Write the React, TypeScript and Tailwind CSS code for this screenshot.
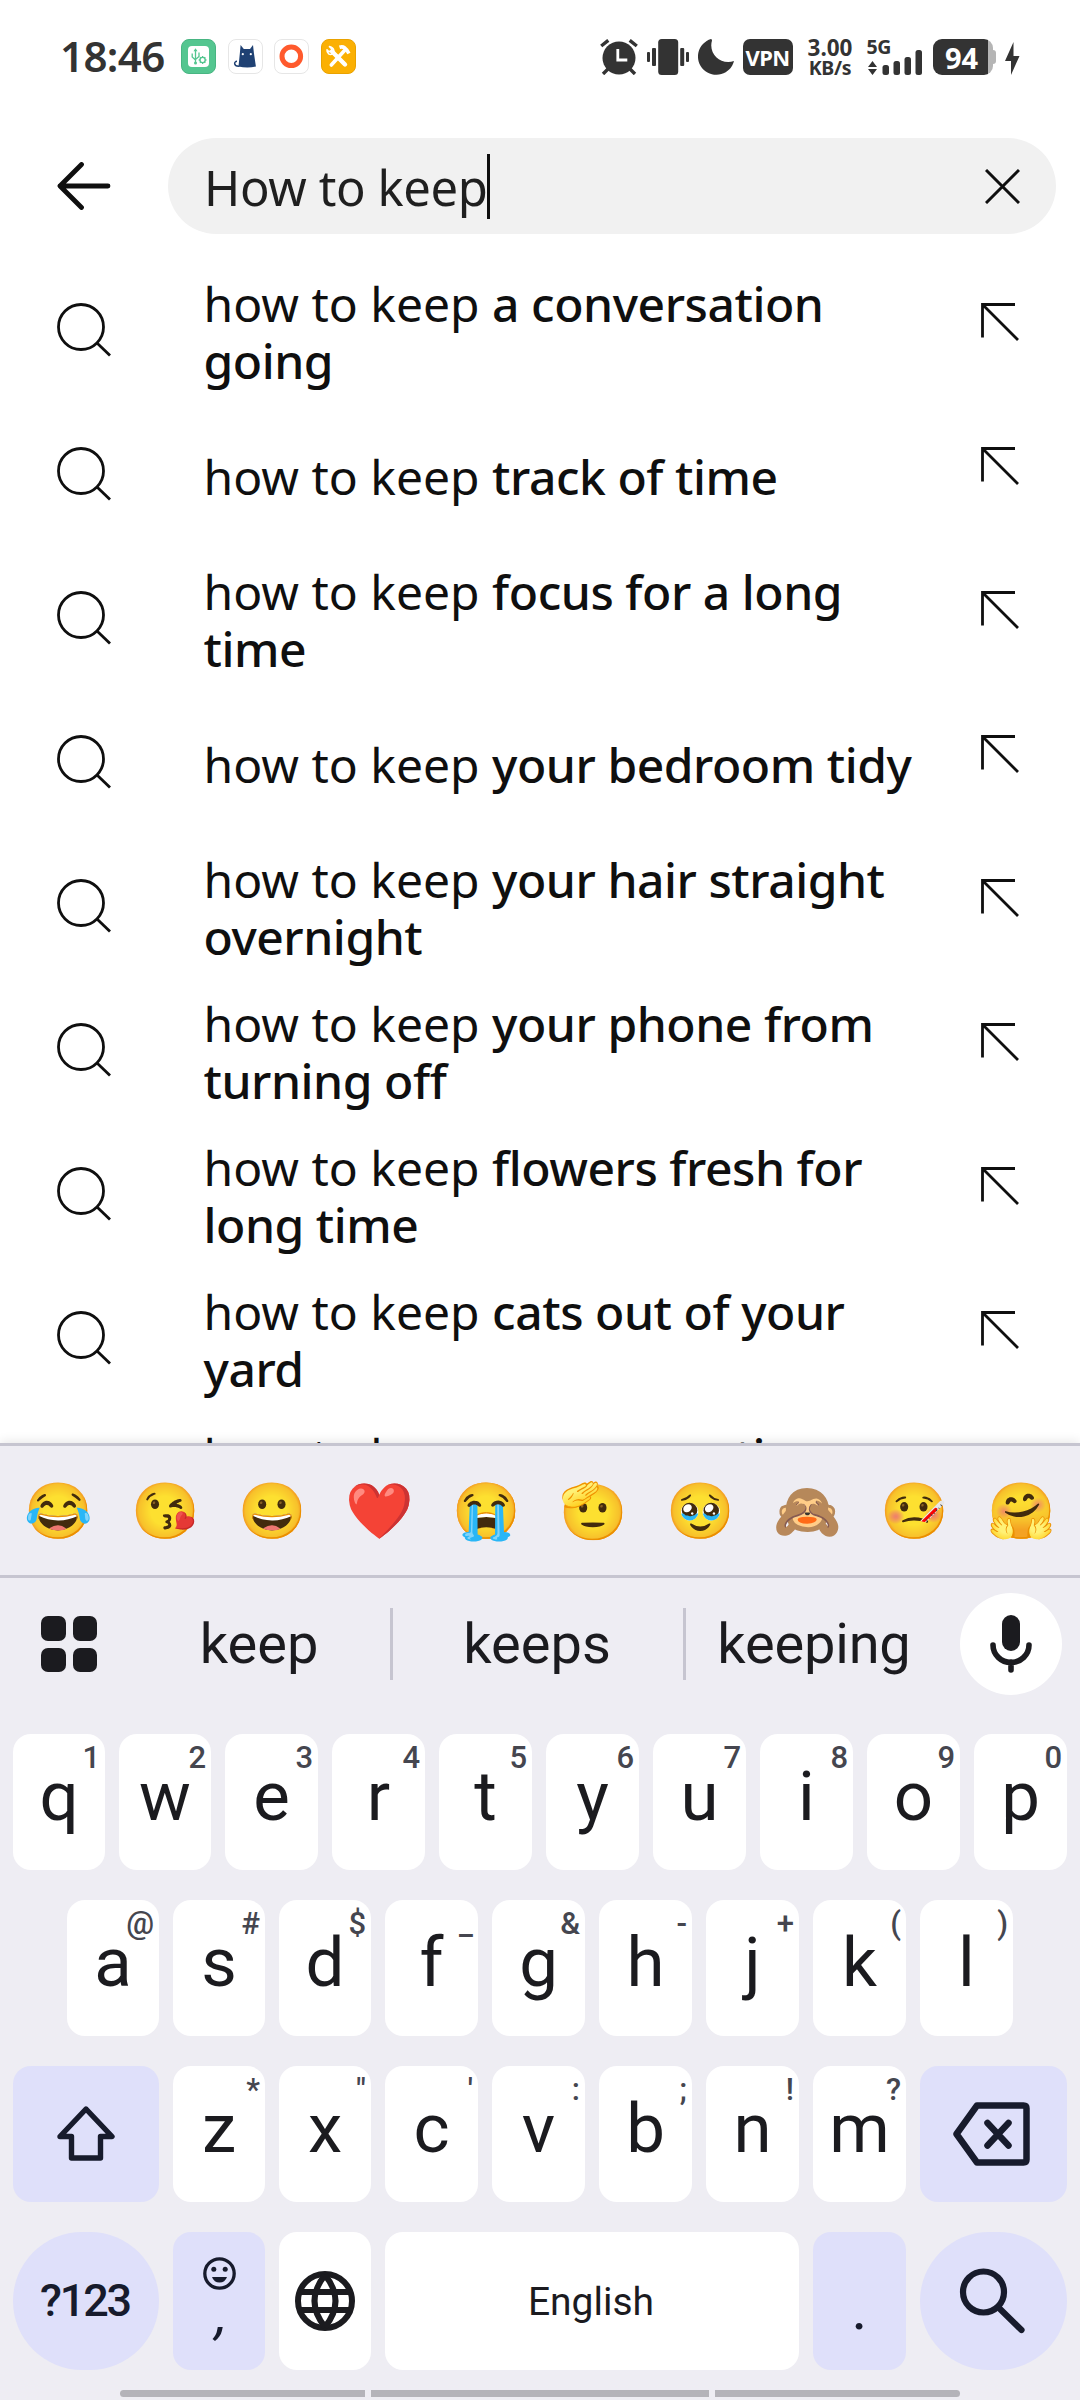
import React from "react";

const SUGGESTIONS: [string, string][] = [
  ["a conversation", "going"],
  ["track of time", ""],
  ["focus for a long", "time"],
  ["your bedroom tidy", ""],
  ["your hair straight", "overnight"],
  ["your phone from", "turning off"],
  ["flowers fresh for", "long time"],
  ["cats out of your", "yard"],
  ["a conversation", "going"],
];

const EMOJIS = ["😂", "😘", "😀", "❤️", "😭", "🫡", "🥹", "🙈", "🤒", "🤗"];

const ROW1: [string, string][] = [["q", "1"], ["w", "2"], ["e", "3"], ["r", "4"], ["t", "5"], ["y", "6"], ["u", "7"], ["i", "8"], ["o", "9"], ["p", "0"]];
const ROW2: [string, string][] = [["a", "@"], ["s", "#"], ["d", "$"], ["f", "_"], ["g", "&"], ["h", "-"], ["j", "+"], ["k", "("], ["l", ")"]];
const ROW3: [string, string][] = [["z", "*"], ["x", '"'], ["c", "'"], ["v", ":"], ["b", ";"], ["n", "!"], ["m", "?"]];

function StatusBar() {
  return (
    <header className="flex h-[114px] shrink-0 items-start pt-[39px] font-['Noto_Sans',sans-serif] text-[#333333]">
      <div className="ml-[60px] h-9 w-[121px] text-[42px] leading-[34px] font-semibold tracking-[-0.6px] whitespace-nowrap">18:46</div>
      <div className="flex gap-[11.5px]">
        <svg className="size-[35px]" viewBox="0 0 35 35">
          <rect x=".5" y=".5" width="34" height="34" rx="7.5" fill="#54c690" stroke="#48b582" />
          <rect x="7" y="7" width="21" height="21" rx="4" fill="#fff" />
          <g stroke="#54c690" fill="none" strokeWidth="1.3">
            <path d="M14.5 11v13M11.2 14.5v3.5l3.3 3M18 13.5v4l-3.5 3" />
            <circle cx="21.6" cy="21" r="2.6" />
            <path d="M21.6 17v1.4M21.6 23.6V25M17.7 21h1.4M24.1 21h1.4M18.9 18.3l1 1M23.3 22.7l1 1M24.3 18.3l-1 1M19.9 22.7l-1 1" />
          </g>
          <path d="M14.5 9.3l2 3h-4z" fill="#54c690" />
          <circle cx="14.5" cy="24" r="1.5" fill="#54c690" />
        </svg>
        <svg className="size-[35px]" viewBox="0 0 35 35">
          <rect x=".5" y=".5" width="34" height="34" rx="7.5" fill="#fff" stroke="#e6e6e6" />
          <path d="M12.6 6l3.2 4h6.2l3-4 .9 8 2 13.4q-8.500 2-17.400 0l1.400-13.600z" fill="#1f4173" />
          <path d="M9 22.3c-3.2 0-3.8 5.3 2.500 4.800" fill="none" stroke="#1f4173" strokeWidth="1.500" />
          <circle cx="14.8" cy="15.2" r="1.100" fill="#fff" />
          <circle cx="22.8" cy="15.2" r="1.100" fill="#fff" />
        </svg>
        <svg className="size-[35px]" viewBox="0 0 35 35">
          <rect x=".5" y=".5" width="34" height="34" rx="7.5" fill="#fff" stroke="#e6e6e6" />
          <circle cx="17.300" cy="17.300" r="9.300" fill="none" stroke="#ff5a2d" strokeWidth="5" />
        </svg>
        <svg className="size-[35px]" viewBox="0 0 35 35">
          <rect x=".5" y=".5" width="34" height="34" rx="7.5" fill="#fbb003" stroke="#e9a200" />
          <g stroke="#fff" fill="none">
            <path d="M11 12.500L24 25.500" strokeWidth="4.400" strokeLinecap="round" />
            <path d="M10.300 26L23.500 11.500" strokeWidth="3.600" strokeLinecap="round" />
            <path d="M8.500 7.600l2.300 2.300-.6 2.200-2.500.5-1.700-1.700c-.4 3.800 3 5.200 5.200 4.200s3-6-2.700-7.500z" strokeWidth="1.600" strokeLinejoin="round" />
            <path d="M18.500 8.300c4-1.300 6.300.4 9.400 6.200" strokeWidth="3.600" />
          </g>
        </svg>
      </div>
      <svg className="ml-[244px] h-9 w-[38px]" viewBox="0 0 38 36">
        <g fill="none" stroke="#333" strokeWidth="3.400">
          <path d="M1.200 7L8.300 1.300M29.700 1.300L36.800 7M8 30l-5 5M30 30l5 5" />
        </g>
        <circle cx="19" cy="19" r="16.500" fill="#333" />
        <path d="M17.800 10v11h9.500" fill="none" stroke="#fff" strokeWidth="2.800" />
      </svg>
      <svg className="ml-[9px] h-9 w-[42px]" viewBox="0 0 42 36" fill="#333">
        <rect x="11.200" width="20" height="36" rx="3.500" />
        <rect y="13" width="3" height="10" rx="1" />
        <rect x="5" y="9" width="4" height="18" rx="1" />
        <rect x="33.200" y="9" width="4" height="18" rx="1" />
        <rect x="39" y="13" width="3" height="10" rx="1" />
      </svg>
      <svg className="ml-[9px] h-9 w-9" viewBox="0 0 36 36">
        <path d="M13 0A18.300 18.300 0 1 0 36 22C23 26.500 10 15 14 1.500Q14 0 13 0Z" fill="#333" />
      </svg>
      <div className="ml-[9px] flex h-9 w-[50px] items-center justify-center rounded-[7px] bg-[#333333] text-[22px] leading-none font-bold tracking-[-0.6px] text-white">VPN</div>
      <div className="ml-[14px] w-[47px] text-center font-bold">
        <div className="text-[22.500px] leading-[17px] whitespace-nowrap">3.00</div>
        <div className="mt-[3px] text-[19.500px] leading-[18px] tracking-[-0.3px] whitespace-nowrap">KB/s</div>
      </div>
      <div className="ml-[13px] h-9 w-[56px]">
        <div className="text-[19.500px] leading-[15px] font-bold tracking-[-0.5px]">5G</div>
        <svg className="-mt-[4px] h-[25px] w-[56px]" viewBox="0 0 56 25" fill="#333">
          <path d="M1 17l4.500-6 4.500 6zM1 19l4.500 6 4.500-6z" />
          <rect x="15.500" y="15" width="6.500" height="10" rx="2.500" />
          <rect x="26.500" y="11" width="6.500" height="14" rx="2.500" />
          <rect x="37.500" y="7" width="6.500" height="18" rx="2.500" />
          <rect x="48.500" y="0" width="6.500" height="25" rx="2.500" />
        </svg>
      </div>
      <div className="relative ml-[10px] h-9 w-[63px]">
        <div className="absolute top-[11px] right-0 h-[14px] w-2 rounded-[3px] bg-[#b5b5b5]" />
        <div className="relative flex h-9 w-[60px] items-center justify-center overflow-hidden rounded-[9px] bg-[linear-gradient(90deg,#333_55.500px,#b5b5b5_55.500px)] pr-[2px] text-[29px] leading-none font-bold text-white">94</div>
      </div>
      <svg className="mt-[3px] ml-[9px] h-[33px] w-[15px]" viewBox="0 0 15 33">
        <path d="M8.500 0L0 19h6l0 14L14.500 14H8.500z" fill="#333" />
      </svg>
    </header>
  );
}

function Key({ c, h }: { c: string; h: string }) {
  return (
    <div className="relative flex h-[136px] justify-center rounded-[18px] bg-white">
      <span className="absolute top-[9px] right-[5px] text-[31px] leading-[30px] font-medium text-[#45464f]">{h}</span>
      <span className="pt-[23px] text-[69px] leading-[80px]">{c}</span>
    </div>
  );
}

function Keyboard() {
  return (
    <section className="relative z-10 flex h-[957px] shrink-0 flex-col border-t-[3px] border-[#c6c5d0] bg-[#eeedf3] font-['Roboto',sans-serif] text-[#1b1b1f] shadow-[0_-2px_10px_rgba(0,0,0,0.09)]">
      <div className="grid h-[132px] grid-cols-10 items-center border-b-[3px] border-[#c6c5d0] px-[5px] font-['Noto_Color_Emoji',sans-serif]">
        {EMOJIS.map((e) => (
          <span key={e} className="flex justify-center pt-[1px] text-[55px] leading-none">{e}</span>
        ))}
      </div>
      <div className="flex h-[156px] items-start pt-[15px]">
        <div className="mt-[23px] ml-[41px] grid h-14 w-14 grid-cols-2 gap-[7px]">
          <i className="rounded-[7px] bg-[#1b1b1f]" />
          <i className="rounded-[7px] bg-[#1b1b1f]" />
          <i className="rounded-[7px] bg-[#1b1b1f]" />
          <i className="rounded-[7px] bg-[#1b1b1f]" />
        </div>
        <div className="ml-[31px] w-[262px] pt-[18px] text-center text-[56px] leading-[66px]">keep</div>
        <div className="mt-[15px] h-[72px] w-[3px] bg-[#c6c5d0]" />
        <div className="w-[290px] pt-[18px] pr-[2px] text-center text-[56px] leading-[66px]">keeps</div>
        <div className="mt-[15px] h-[72px] w-[3px] bg-[#c6c5d0]" />
        <div className="w-[256px] pt-[18px] text-center text-[56px] leading-[66px] tracking-[-0.2px]">keeping</div>
        <div className="ml-[18px] flex size-[102px] items-center justify-center rounded-full bg-white">
          <svg className="h-[58px] w-[42px]" viewBox="0 0 42 58">
            <rect x="12" y="0" width="18" height="36" rx="9" fill="#1b1b1f" />
            <path d="M3 30a18 17.500 0 0 0 36 0M21 47v8" fill="none" stroke="#1b1b1f" strokeWidth="5.600" strokeLinecap="round" />
          </svg>
        </div>
      </div>
      <div className="grid grid-cols-[92px_92px_repeat(8,93px)] gap-x-[14px] px-[13px]">
        {ROW1.map(([c, h]) => <Key key={c} c={c} h={h} />)}
      </div>
      <div className="mt-[30px] grid grid-cols-[92px_92px_92px_repeat(6,93px)] gap-x-[14px] px-[67px]">
        {ROW2.map(([c, h]) => <Key key={c} c={c} h={h} />)}
      </div>
      <div className="mt-[30px] grid grid-cols-[146px_92px_92px_repeat(5,93px)_147px] gap-x-[14px] px-[13px]">
        <div className="flex items-center justify-center rounded-[18px] bg-[#dfe0fa]">
          <svg className="h-[58px] w-[58px]" viewBox="0 0 58 58">
            <path d="M29 4L55 31.500H43.500V53H14.500V31.500H3Z" fill="none" stroke="#171b2c" strokeWidth="5.400" strokeLinejoin="round" />
          </svg>
        </div>
        {ROW3.map(([c, h]) => <Key key={c} c={c} h={h} />)}
        <div className="flex items-center justify-center rounded-[18px] bg-[#dfe0fa] pr-[5px]">
          <svg className="h-[64px] w-[77px]" viewBox="0 0 77 64">
            <path d="M24 3.500H70.500Q73.500 3.500 73.500 6.500V57.500Q73.500 60.500 70.500 60.500H24L3.500 32Z" fill="none" stroke="#171b2c" strokeWidth="6.500" strokeLinejoin="round" />
            <path d="M34.500 21L55.500 43.500M55.500 21L34.500 43.500" stroke="#171b2c" strokeWidth="6.500" strokeLinecap="round" />
          </svg>
        </div>
      </div>
      <div className="mt-[30px] grid h-[138px] grid-cols-[146px_92px_92px_414px_93px_147px] gap-x-[14px] px-[13px]">
        <div className="flex items-center justify-center rounded-full bg-[#dfe0fa] pr-[2px] text-[45px] font-medium tracking-[-2.200px] text-[#171b2c]">?123</div>
        <div className="flex flex-col items-center rounded-[18px] bg-[#dfe0fa] pt-[25px] text-[#171b2c]">
          <svg className="size-[33px]" viewBox="0 0 33 33">
            <circle cx="16.500" cy="16.500" r="14.700" fill="none" stroke="#171b2c" strokeWidth="3.300" />
            <circle cx="10.800" cy="12.300" r="2.500" fill="#171b2c" />
            <circle cx="22.200" cy="12.300" r="2.500" fill="#171b2c" />
            <path d="M9 20h15q-2 5.500-7.500 5.500T9 20z" fill="#171b2c" />
          </svg>
          <span className="-mt-[6px] ml-[7px] -skew-x-12 text-[56px] leading-[60px]">,</span>
        </div>
        <div className="flex items-center justify-center rounded-[18px] bg-white">
          <svg className="size-[60px]" viewBox="0 0 60 60" fill="none" stroke="#1b1b1f" strokeWidth="6">
            <circle cx="30" cy="30" r="27" />
            <path d="M4 21H56M4 39H56M30 4Q9 30 30 56M30 4Q51 30 30 56" />
          </svg>
        </div>
        <div className="flex items-center justify-center rounded-[18px] bg-white pt-[2px] pr-[2px] text-[39px]">English</div>
        <div className="flex justify-center rounded-[18px] bg-[#dfe0fa] pt-[42px] text-[60px] leading-[70px] text-[#171b2c]">.</div>
        <div className="flex items-center justify-center rounded-full bg-[#dfe0fa] pr-[3px]">
          <svg className="h-[66px] w-[66px]" viewBox="0 0 66 66" fill="none" stroke="#171b2c" strokeWidth="6.200" strokeLinecap="round">
            <circle cx="24.500" cy="24" r="20.500" />
            <path d="M40 40L62.500 62" />
          </svg>
        </div>
      </div>
      <div className="mt-[20px] flex h-[7px] gap-[6px] pl-[120px]">
        <div className="w-[245px] rounded-l-full bg-[#b4b3b9]" />
        <div className="w-[338px] bg-[#b4b3b9]" />
        <div className="w-[245px] rounded-r-full bg-[#b4b3b9]" />
      </div>
    </section>
  );
}

export default function App() {
  return (
    <div className="flex h-[2400px] w-[1080px] flex-col overflow-hidden bg-white">
      <StatusBar />
      <div className="flex h-[146px] shrink-0 items-start pt-6">
        <svg className="mt-6 ml-[57px] h-12 w-[54px]" viewBox="0 0 54 48" fill="none" stroke="#0f0f0f" strokeWidth="4.800" strokeLinecap="round" strokeLinejoin="round">
          <path d="M51 24H3M24.500 2.500L3 24L24.500 45.500" />
        </svg>
        <div className="ml-[57px] flex h-24 w-[888px] items-center rounded-full bg-[#f1f1f1] font-['Noto_Sans',sans-serif] text-[#1f1f1f]">
          <span className="ml-[36px] pt-[2px] text-[49px] leading-[60px] tracking-[-0.4px] whitespace-nowrap">How to keep</span>
          <span className="h-[65px] w-[3px] bg-[#0f0f0f]" />
          <svg className="mr-[36px] ml-auto size-[35px]" viewBox="0 0 35 35" fill="none" stroke="#0f0f0f" strokeWidth="3">
            <path d="M1 1L34 34M34 1L1 34" />
          </svg>
        </div>
      </div>
      <div className="h-[1183px] shrink-0 overflow-hidden font-['Noto_Sans',sans-serif] text-[48px] leading-[57px] text-[#0f0f0f]">
        {SUGGESTIONS.map(([a, b], i) => (
          <div key={i} className="flex h-36 items-center">
            <svg className="mt-[43px] ml-[57px] h-[54px] w-[54px] self-start" viewBox="0 0 54 54" fill="none" stroke="#0f0f0f" strokeWidth="2.800">
              <circle cx="24" cy="24" r="22.500" />
              <path d="M40 40L53 52.500" />
            </svg>
            <div className="ml-[92.500px] w-[760px] whitespace-nowrap">
              how to keep <span className="font-medium tracking-[-0.450px]">{a}{b && <br />}{b}</span>
            </div>
            <svg className="mt-[43px] ml-[17.500px] h-[38px] w-[38px] self-start" viewBox="0 0 38 38" fill="none" stroke="#0f0f0f" strokeWidth="2.800">
              <path d="M34 1.500H1.500V34.500M2 2L37 37" />
            </svg>
          </div>
        ))}
      </div>
      <Keyboard />
    </div>
  );
}
